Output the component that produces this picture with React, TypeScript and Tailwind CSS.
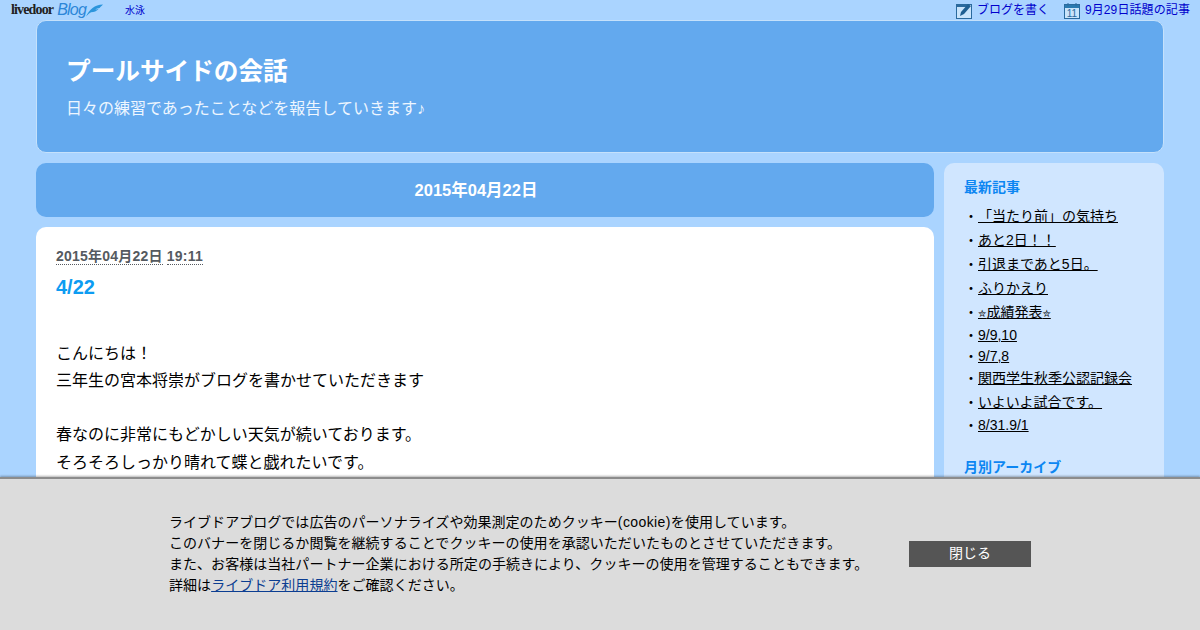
const sans = "font-['Liberation_Sans','Noto_Sans_CJK_JP',sans-serif]";

const recent = [
  { title: "「当たり前」の気持ち", h: "h-6" },
  { title: "あと2日！！", h: "h-6" },
  { title: "引退まであと5日。", h: "h-6" },
  { title: "ふりかえり", h: "h-6" },
  { title: "成績発表", h: "h-6", star: true },
  { title: "9/9,10", h: "h-[22px]" },
  { title: "9/7,8", h: "h-5" },
  { title: "関西学生秋季公認記録会", h: "h-6" },
  { title: "いよいよ試合です。", h: "h-6" },
  { title: "8/31.9/1", h: "h-[22px]" },
];

const Star = () => <span className="font-['DejaVu_Sans'] text-[10px]">✮</span>;

const Logo = () => (
  <div className="flex items-center w-[92px] h-[18px] shrink-0">
    <span className="font-['Liberation_Serif',serif] font-bold text-[14px] leading-none tracking-[-0.85px] text-[#222]">livedoor</span>
    <span className="ml-[4px] font-['Liberation_Sans',sans-serif] italic text-[16px] leading-none tracking-[-0.8px] text-[#2b86d8]">Blog</span>
    <svg width="18" height="15" viewBox="0 0 20 16" className="ml-auto">
      <path d="M0 15C4 7 10 1 20 1c-2 2-3 3-4 4-2 0-4 1-5 2 1 0 3-1 4-1-2 3-6 4-9 4-2 1-4 3-6 5z" fill="#2b95dc" />
    </svg>
  </div>
);

const PenIcon = () => (
  <svg width="17" height="17" viewBox="0 0 17 17">
    <rect x="0.5" y="2.5" width="15" height="14" fill="#c9e4fb" stroke="#2a6a9e" />
    <rect x="1" y="3" width="10" height="2" fill="#2a6a9e" />
    <path d="M4 14l1-4 7-8 3 2-7 8z" fill="#1f5f92" />
  </svg>
);

const CalendarIcon = () => (
  <svg width="17" height="17" viewBox="0 0 17 17">
    <rect x="0.5" y="2.5" width="15" height="14" fill="#c9e4fb" stroke="#2a6a9e" />
    <rect x="1" y="3" width="14" height="3" fill="#2a7ab0" />
    <path d="M4 1v3M12 1v3" stroke="#2a6a9e" />
    <text x="8" y="15" textAnchor="middle" fontSize="10" fontFamily="Liberation Sans" fill="#2a6a9e">11</text>
  </svg>
);

export default function App() {
  return (
    <div className={`relative w-[1200px] h-[630px] overflow-hidden bg-[#aad4ff] ${sans}`}>
      <div className="flex items-center h-[20px] pl-[11px] pr-[10px] text-[12px] text-[#0000cc]">
        <Logo />
        <a className="ml-[22px] text-[10px]">水泳</a>
        <div className="ml-auto flex items-center">
          <PenIcon />
          <a className="ml-[4px]">ブログを書く</a>
          <span className="ml-[15px]"><CalendarIcon /></span>
          <a className="ml-[4px] tracking-[0.1px]">9月29日話題の記事</a>
        </div>
      </div>

      <div className="mx-[36px]">
        <header className="h-[133px] rounded-[10px] border border-[#c5e1fb] bg-[#63a9ee] pl-[29px] pt-[36px] text-white">
          <h1 className="text-[24.65px] leading-[30px] font-bold">プールサイドの会話</h1>
          <p className="mt-[10px] text-[16px] leading-[24px] text-[#eef6ff]">日々の練習であったことなどを報告していきます♪</p>
        </header>

        <div className="flex mt-[10px] gap-[10px]">
          <main className="w-[898px]">
            <h2 className="h-[54px] rounded-[10px] bg-[#63a9ee] pr-[18px] text-center text-[16.5px] font-bold leading-[54px] text-white">2015年04月22日</h2>
            <article className="mt-[10px] h-[400px] rounded-[10px] bg-white pl-[20px] pt-[20px]">
              <div className="text-[14px] leading-[18px] font-bold tracking-[0.22px] text-[#555a60]">
                <span className="border-b border-dotted border-[#555a60]">2015年04月22日</span>{" "}
                <span className="border-b border-dotted border-[#555a60]">19:11</span>
              </div>
              <h3 className="mt-[9px] text-[20px] leading-[26px] font-bold text-[#0d9cf2]">4/22</h3>
              <div className="mt-[40px] text-[16px] leading-[27px] text-black">
                <p>こんにちは！</p>
                <p>三年生の宮本将崇がブログを書かせていただきます</p>
                <p>&nbsp;</p>
                <p>春なのに非常にもどかしい天気が続いております。</p>
                <p>そろそろしっかり晴れて<span className="font-['Noto_Sans_CJK_SC']">蝶</span>と戯れたいです。</p>
              </div>
            </article>
          </main>

          <aside className="w-[220px] h-[400px] rounded-[10px] bg-[#d0e6ff] pl-[20px] pt-[15px]">
            <h4 className="text-[14px] leading-[18px] font-bold text-[#0d86f2]">最新記事</h4>
            <ul className="mt-[8px] text-[14px] text-black">
              {recent.map((item) => (
                <li key={item.title} className={`flex items-center ${item.h}`}>
                  <span className="w-[14px] shrink-0">・</span>
                  <a className="underline">
                    {item.star && <Star />}
                    {item.title}
                    {item.star && <Star />}
                  </a>
                </li>
              ))}
            </ul>
            <h4 className="mt-[22px] text-[14px] leading-[18px] font-bold text-[#0d86f2]">月別アーカイブ</h4>
          </aside>
        </div>
      </div>

      <div className="absolute left-0 right-0 bottom-0 flex h-[153px] border-t-2 border-[#8c8c8c] bg-[#dcdcdc] pl-[169px] pt-[33px] shadow-[0_-1px_2px_rgba(0,0,0,0.3)]">
        <p className="w-[740px] text-[14px] leading-[21px] tracking-[0.04px] text-black">
          ライブドアブログでは広告のパーソナライズや効果測定のためクッキー<span className="tracking-[0.4px]">(cookie)</span>を使用しています。<br />
          このバナーを閉じるか閲覧を継続することでクッキーの使用を承認いただいたものとさせていただきます。<br />
          また、お客様は当社パートナー企業における所定の手続きにより、クッキーの使用を管理することもできます。<br />
          詳細は<a className="text-[#0b3d91] underline">ライブドア利用規約</a>をご確認ください。
        </p>
        <button className="mt-[29px] h-[26px] w-[122px] bg-[#555555] pb-[2px] text-[14px] text-white">閉じる</button>
      </div>
    </div>
  );
}
